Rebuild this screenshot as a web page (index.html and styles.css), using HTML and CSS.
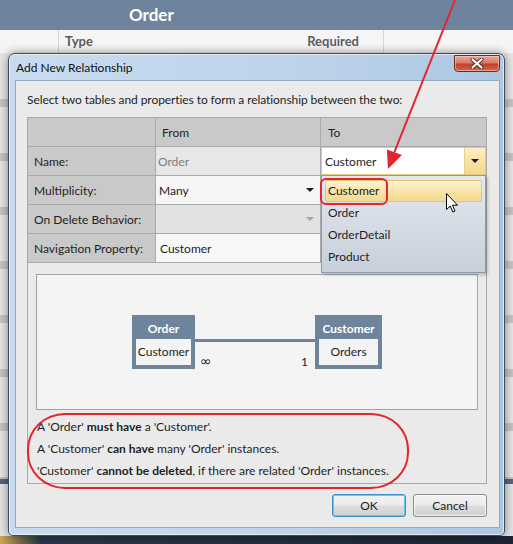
FILE: index.html
```html
<!DOCTYPE html>
<html lang="en">
<head>
    <meta charset="UTF-8">
    <meta name="viewport" content="width=device-width, initial-scale=1.0">
    <title>Add New Relationship</title>
    <link rel="stylesheet" href="styles.css">
</head>
<body>
    <!-- Designer surface behind the dialog -->
    <div class="designer">
        <div class="designer-title">Order</div>
        <div class="designer-cols">
            <div class="col-blank"></div>
            <div class="col-type"><span>Type</span><span>Required</span></div>
            <div class="col-rest"></div>
        </div>
        <div class="designer-rows"></div>
        <div class="designer-bar"></div>
        <div class="designer-gap"></div>
        <div class="taskbar"></div>
    </div>

    <!-- Dialog -->
    <div class="dialog">
        <div class="dialog-titlebar">
            <span class="dialog-title">Add New Relationship</span>
            <button class="close-btn">
                <svg width="14" height="11" viewBox="0 0 14 11">
                    <path d="M2.5 1.5 L11.5 9.5 M11.5 1.5 L2.5 9.5" stroke="#5a2a22" stroke-width="4" stroke-linecap="round"/>
                    <path d="M2.5 1.5 L11.5 9.5 M11.5 1.5 L2.5 9.5" stroke="#ffffff" stroke-width="2.2" stroke-linecap="round"/>
                </svg>
            </button>
        </div>

        <div class="dialog-body">
            <p class="intro">Select two tables and properties to form a relationship between the two:</p>

            <div class="rel-table">
                <div class="cell cell-head"></div>
                <div class="cell cell-head">From</div>
                <div class="cell cell-head cell-to">To</div>

                <div class="cell cell-label">Name:</div>
                <div class="cell cell-readonly">Order</div>
                <div class="cell cell-combo">
                    <div class="combo combo-hot">
                        <span>Customer</span>
                        <span class="combo-btn"><span class="caret"></span></span>
                    </div>
                </div>

                <div class="cell cell-label">Multiplicity:</div>
                <div class="cell cell-combo">
                    <div class="combo">
                        <span>Many</span>
                        <span class="caret"></span>
                    </div>
                </div>
                <div class="cell"></div>

                <div class="cell cell-label">On Delete Behavior:</div>
                <div class="cell cell-combo cell-disabled">
                    <div class="combo">
                        <span></span>
                        <span class="caret caret-off"></span>
                    </div>
                </div>
                <div class="cell"></div>

                <div class="cell cell-label">Navigation Property:</div>
                <div class="cell cell-text">Customer</div>
                <div class="cell"></div>
            </div>

            <div class="preview">
                <div class="diagram">
                    <div class="entity entity-order">
                        <div class="entity-name">Order</div>
                        <div class="entity-prop">Customer</div>
                    </div>
                    <div class="connector">
                        <div class="connector-line"></div>
                        <div class="connector-ends"><span class="many">∞</span><span>1</span></div>
                    </div>
                    <div class="entity entity-customer">
                        <div class="entity-name">Customer</div>
                        <div class="entity-prop">Orders</div>
                    </div>
                </div>
                <div class="summary">
                    <p>A 'Order' <b>must have</b> a 'Customer'.</p>
                    <p>A 'Customer' <b>can have</b> many 'Order' instances.</p>
                    <p>'Customer' <b>cannot be deleted</b>, if there are related 'Order' instances.</p>
                </div>
            </div>

            <div class="dialog-buttons">
                <button class="btn btn-default">OK</button>
                <button class="btn">Cancel</button>
            </div>
        </div>
    </div>

    <!-- Open dropdown of the To/Name combo -->
    <div class="dropdown">
        <div class="dropdown-item selected">Customer</div>
        <div class="dropdown-item">Order</div>
        <div class="dropdown-item">OrderDetail</div>
        <div class="dropdown-item">Product</div>
    </div>

    <svg class="cursor" width="13" height="20" viewBox="0 0 13 20">
        <path d="M0.5 0.5 L0.5 16.5 L4.2 13 L6.8 19 L9 18 L6.4 12.2 L11.5 12.2 Z" fill="#ffffff" stroke="#000000" stroke-width="1" stroke-linejoin="round"/>
    </svg>

    <!-- Red annotations -->
    <div class="callout callout-item"></div>
    <div class="callout callout-summary"></div>
    <svg class="arrow" width="513" height="544" viewBox="0 0 513 544">
        <line x1="455" y1="0" x2="394.4" y2="152.2" stroke="#e3262e" stroke-width="2"/>
        <polygon points="388,169 401.9,155 386.9,149.4" fill="#e3262e"/>
    </svg>
</body>
</html>
```

FILE: styles.css
```css
* {
    box-sizing: border-box;
}

body {
    margin: 0;
    width: 513px;
    height: 544px;
    overflow: hidden;
    position: relative;
    background: #e4e4e4;
    font-family: Lato, "Noto Sans", sans-serif;
    font-size: 12px;
    color: #1e1e1e;
}

/* Designer behind the dialog */
.designer {
    display: flex;
    flex-direction: column;
    height: 544px;
}

.designer-title {
    height: 30px;
    line-height: 30px;
    padding-left: 129px;
    background: #6e849c;
    color: #ffffff;
    font-weight: bold;
    font-size: 17px;
}

.designer-cols {
    height: 23px;
    display: flex;
    background: #f5f5f5;
    color: #5c5c5c;
    font-weight: bold;
    font-size: 13px;
    line-height: 23px;
}

.col-blank {
    width: 59px;
    border-right: 1px solid #d4d4d4;
}

.col-type {
    width: 325px;
    display: flex;
    justify-content: space-between;
    padding: 0 24px 0 6px;
    border-right: 1px solid #d4d4d4;
}

.col-rest {
    flex: 1;
}

.designer-rows {
    flex: 1;
    background: repeating-linear-gradient(to bottom, #e6e6e6 0, #e6e6e6 46px, #c4c4c4 46px, #c4c4c4 54px);
}

.designer-bar {
    height: 5px;
    background: #56657a;
}

.designer-gap {
    height: 52px;
    background: #e4e4e4;
}

.taskbar {
    height: 8px;
    background: linear-gradient(to right, #c9a850 0, #2a3648 40px, #1c2534 100%);
}

/* Dialog window */
.dialog {
    position: absolute;
    left: 8px;
    top: 53px;
    width: 497px;
    height: 483px;
    display: flex;
    flex-direction: column;
    padding: 0 4px 7px 6px;
    border: 1px solid #3b4a5c;
    border-radius: 7px 7px 5px 5px;
    background: linear-gradient(to right, #c9dcef 0, #bed4ea 55%, #adc7e3 100%);
    box-shadow: 0 0 10px rgba(0, 0, 0, 0.45), inset 0 0 0 1px rgba(255, 255, 255, 0.6);
}

.dialog-titlebar {
    height: 26px;
    display: flex;
    justify-content: space-between;
    align-items: center;
    padding-left: 1px;
}

.dialog-title {
    color: #101010;
}

.close-btn {
    align-self: flex-start;
    margin-top: 1px;
    width: 46px;
    height: 17px;
    padding: 0;
    display: flex;
    align-items: center;
    justify-content: center;
    border: 1px solid #6a2e24;
    border-radius: 0 0 4px 4px;
    background: linear-gradient(to bottom, #e9a99a 0, #d97a66 45%, #c1402b 55%, #d0684c 100%);
    box-shadow: inset 0 0 0 1px rgba(255, 220, 210, 0.5);
}

.dialog-body {
    flex: 1;
    display: flex;
    flex-direction: column;
    padding: 11px 12px 10px 11px;
    background: #eaeaea;
    border: 1px solid #99aabe;
}

.intro {
    margin: 0 0 9px;
    line-height: 16px;
    letter-spacing: -0.08px;
}

/* Property grid */
.rel-table {
    display: grid;
    grid-template-columns: 127px 164px 165px;
    grid-auto-rows: 28px;
    gap: 1px;
    background: #a9a9a9;
    border: 1px solid #a9a9a9;
    border-bottom: none;
}

.cell {
    display: flex;
    align-items: center;
    padding-left: 6px;
    background: #f6f6f6;
}

.cell-head,
.cell-label {
    background: #c9c9c9;
}

.cell-to {
    padding-left: 7px;
}

.cell-readonly {
    padding-left: 2px;
    background: #e7e7e7;
    color: #7d7d7d;
}

.cell-text {
    padding-left: 4px;
    background: #f7f7f7;
}

.cell-combo {
    padding-left: 0;
    align-items: stretch;
}

.cell-disabled {
    background: #e2e2e2;
}

.combo {
    flex: 1;
    display: flex;
    justify-content: space-between;
    align-items: center;
    padding: 0 6px 0 3px;
}

.combo-hot {
    padding: 0 0 0 3px;
    background: #ffffff;
    border: 1px solid #e4cb84;
    align-items: stretch;
}

.combo-hot span:first-child {
    display: flex;
    align-items: center;
}

.combo-btn {
    width: 21px;
    display: flex;
    align-items: center;
    justify-content: center;
    background: linear-gradient(to bottom, #fcefc4 0, #f6e3a6 50%, #f2d98c 100%);
    border-left: 1px solid #ead08a;
}

.caret {
    width: 0;
    height: 0;
    border-left: 4px solid transparent;
    border-right: 4px solid transparent;
    border-top: 4px solid #1e1e1e;
}

.caret-off {
    border-top-color: #a6a6a6;
}

/* Preview */
.preview {
    height: 222px;
    display: flex;
    flex-direction: column;
    padding: 11px 8px 0;
    border: 1px solid #a9a9a9;
}

.diagram {
    height: 136px;
    display: flex;
    justify-content: center;
    align-items: center;
    background: #f4f4f4;
    border: 1px solid #a3a3a3;
}

.entity {
    display: flex;
    flex-direction: column;
    padding: 0 4px 4px;
    background: #6e849c;
}

.entity-order {
    width: 63px;
}

.entity-customer {
    width: 67px;
}

.entity-name {
    height: 24px;
    line-height: 27px;
    text-align: center;
    color: #ffffff;
    font-weight: bold;
}

.entity-prop {
    height: 26px;
    line-height: 26px;
    text-align: center;
    background: #f4f4f4;
}

.connector {
    width: 120px;
    height: 54px;
    display: flex;
    flex-direction: column;
}

.connector-line {
    margin-top: 24px;
    height: 3px;
    background: #6e849c;
}

.connector-ends {
    display: flex;
    justify-content: space-between;
    align-items: center;
    margin-top: 12px;
    padding: 0 7px 0 5px;
    height: 14px;
}

.connector-ends .many {
    font-family: "DejaVu Sans", sans-serif;
    font-size: 14px;
}

.summary {
    margin-top: 6px;
}

.summary p {
    margin: 0;
    padding-left: 1px;
    line-height: 22px;
}

/* Buttons */
.dialog-buttons {
    margin-top: 10px;
    display: flex;
    justify-content: flex-end;
    gap: 7px;
}

.btn {
    width: 74px;
    height: 23px;
    padding: 0;
    font: inherit;
    color: #1e1e1e;
    border: 1px solid #8a8a8a;
    border-radius: 3px;
    background: linear-gradient(to bottom, #f3f3f3 0, #ebebeb 48%, #dddddd 52%, #d0d0d0 100%);
    box-shadow: inset 0 0 0 1px rgba(255, 255, 255, 0.7);
}

.btn-default {
    border-color: #3c8fc4;
    box-shadow: inset 0 0 0 1px #62ccf0;
}

/* Dropdown list */
.dropdown {
    position: absolute;
    left: 321px;
    top: 175px;
    width: 165px;
    height: 98px;
    padding: 4px 3px;
    border: 1px solid #8b9aad;
    background: linear-gradient(to bottom, #e5e9ef 0, #c6cfdb 100%);
    box-shadow: 2px 2px 3px rgba(0, 0, 0, 0.2);
}

.dropdown-item {
    height: 22px;
    line-height: 20px;
    padding-left: 2px;
    border: 1px solid transparent;
    border-radius: 2px;
}

.dropdown-item.selected {
    background: linear-gradient(to bottom, #fdf4d6 0, #f8e4a8 50%, #f5d98e 100%);
    border-color: #e3c46c;
}

.cursor {
    position: absolute;
    left: 446px;
    top: 193px;
}

/* Red annotations */
.callout {
    position: absolute;
    border: 2px solid #e3262e;
}

.callout-item {
    left: 320px;
    top: 178px;
    width: 68px;
    height: 27px;
    border-radius: 6px;
}

.callout-summary {
    left: 27px;
    top: 413px;
    width: 382px;
    height: 76px;
    border-radius: 38px / 36px;
}

.arrow {
    position: absolute;
    left: 0;
    top: 0;
    pointer-events: none;
}
```
